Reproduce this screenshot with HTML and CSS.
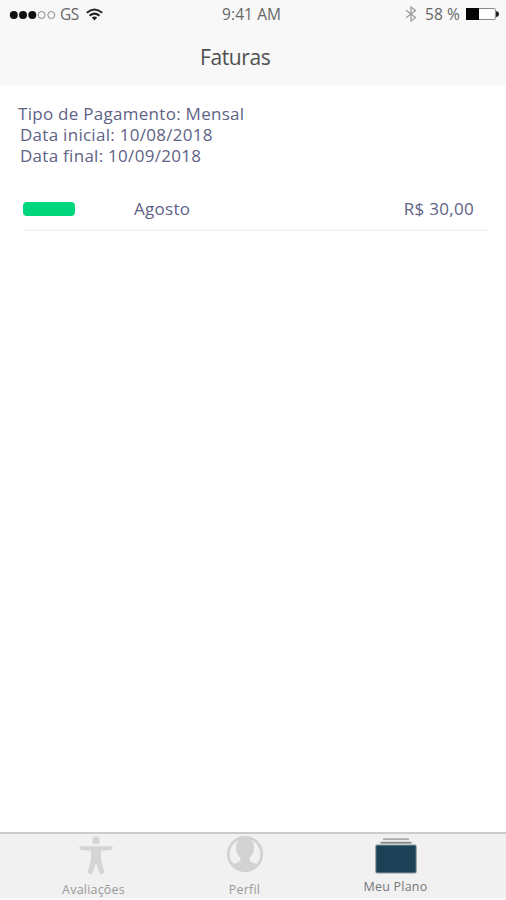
FILE: index.html
```html
<!DOCTYPE html>
<html lang="pt-BR">
<head>
<meta charset="utf-8">
<title>Faturas</title>
<link rel="stylesheet" href="styles.css">
</head>
<body>
<div class="app">
  <header class="header">
    <div class="status">
      <div class="carrier">
        <svg class="signal" width="47" height="12" viewBox="0 0 47 12"><g fill="#111"><circle cx="4.8" cy="7" r="4"/><circle cx="14" cy="7" r="4"/><circle cx="23.3" cy="7" r="4"/></g><g fill="none" stroke="#888"><circle cx="32.6" cy="7" r="3.5"/><circle cx="42.3" cy="7" r="3.5"/></g></svg>
        <span class="operator">GS</span>
        <svg class="wifi" width="17" height="13" viewBox="0 0 17 13"><g fill="none" stroke="#222" stroke-width="2"><path d="M.8 4.8Q8.5-1.8 16.2 4.8"/><path d="M3.5 7.7Q8.5 3.5 13.5 7.7"/></g><path d="M5.8 9.5Q8.5 7.4 11.2 9.5L8.5 12.4Z" fill="#222"/></svg>
      </div>
      <div class="clock">9:41 AM</div>
      <div class="power">
        <svg width="12" height="16" viewBox="0 0 12 16"><path d="M1 4.2L10.5 11.5L6 15V1L10.5 4.5L1 11.8" fill="none" stroke="#999" stroke-width="1.2"/></svg>
        <span class="percent">58 %</span>
        <svg width="34" height="14" viewBox="0 0 34 14"><rect x=".6" y="1.5" width="28.8" height="11" rx="1" fill="#fff" stroke="#888"/><path d="M0 1H13V13H0Z" fill="#050505"/><path d="M30 4Q33 4.5 33 7T30 10Z" fill="#222"/></svg>
      </div>
    </div>
    <h1 class="title">Faturas</h1>
  </header>
  <main class="content">
    <div class="plan">
      <p class="payment">Tipo de Pagamento: Mensal</p>
      <p class="start">Data inicial: 10/08/2018</p>
      <p class="end">Data final: 10/09/2018</p>
    </div>
    <div class="invoice">
      <span class="paid"></span>
      <span class="month">Agosto</span>
      <span class="amount">R$ 30,00</span>
    </div>
  </main>
  <nav class="tabs">
    <a class="tab reviews">
      <svg width="34" height="40" viewBox="0 0 34 40"><g fill="#d5d5d5"><circle cx="17" cy="4.2" r="3.8"/><path d="M.5 10.2H33.5V13.5L22 15V24L25.5 37L21 38.5L17 27L13 38.5L8.5 37L12 24V15L.5 13.5Z"/></g></svg>
      <span>Avaliações</span>
    </a>
    <a class="tab profile">
      <svg width="38" height="38" viewBox="0 0 38 38"><circle cx="19" cy="19" r="16.7" fill="#f1f1f1" stroke="#d2d2d2" stroke-width="2.8"/><path d="M19 3C13 3 10 7 10 13C10 18 12 20 14.5 23C15 27 11 28 6 29Q11 36 19 36T32 29C27 28 23 27 23.5 23C26 20 28 18 28 13C28 7 25 3 19 3Z" fill="#d2d2d2"/></svg>
      <span>Perfil</span>
    </a>
    <a class="tab active">
      <svg width="42" height="36" viewBox="0 0 42 36"><path d="M8 1.2H34" stroke="#aaa" stroke-width="1.8"/><path d="M5.5 4.7H36.5" stroke="#808486" stroke-width="1.8"/><rect x=".8" y="7" width="40.4" height="28" rx="1" fill="#1c4056" stroke="#8d9ba2"/></svg>
      <span>Meu Plano</span>
    </a>
  </nav>
</div>
</body>
</html>
```

FILE: styles.css
```css
* { box-sizing: border-box; }
body { margin: 0; background: #fff; font-family: "Open Sans", "Noto Sans", sans-serif; }
.app { height: 900px; width: 506px; display: flex; flex-direction: column; }
.header { height: 86px; background: #f8f8f8; }
.status { height: 28px; display: grid; grid-template-columns: 222px 1fr auto; align-items: center; padding-right: 6px; color: #666; font-size: 15.5px; font-weight: 400; white-space: nowrap; }
.carrier, .power { display: flex; align-items: center; }
.carrier { padding-left: 9px; }
.operator { margin-left: 4px; letter-spacing: -.4px; }
.wifi { margin-left: 7px; }
.clock { letter-spacing: .1px; }
.percent { margin: 0 6px 0 8px; letter-spacing: .1px; }
.title { margin: 14px 0 0 200px; font-size: 21px; line-height: 30px; font-weight: 500; color: #505050; letter-spacing: -.4px; }
.content { flex: 1; padding: 17px 18px 0; color: #606286; font-size: 17px; line-height: 21px; font-weight: 400; letter-spacing: .28px; }
.plan p { margin: 0; }
.plan .start, .plan .end { padding-left: 2px; }
.invoice { display: grid; grid-template-columns: 111px 1fr auto; align-items: center; height: 43px; margin: 22px 0 0 5px; padding-right: 14px; border-bottom: 2px solid #f4f4f4; }
.paid { width: 52px; height: 14px; background: #00d77d; border-radius: 4px; }
.tabs { height: 68px; background: #f1f1f1; border-top: 2px solid #ccc; border-bottom: 2px solid #fafafa; display: flex; padding-left: 18px; }
.tab { display: flex; flex-direction: column; align-items: center; justify-content: space-between; width: 151px; padding: 1px 0 0; color: #999; font-size: 12.5px; line-height: 16px; letter-spacing: .2px; }
.tab svg { flex: none; }
.reviews { padding-top: 2px; }
.reviews svg { margin-left: 4px; }
.active { padding: 4px 0 3px; color: #777; }
```
